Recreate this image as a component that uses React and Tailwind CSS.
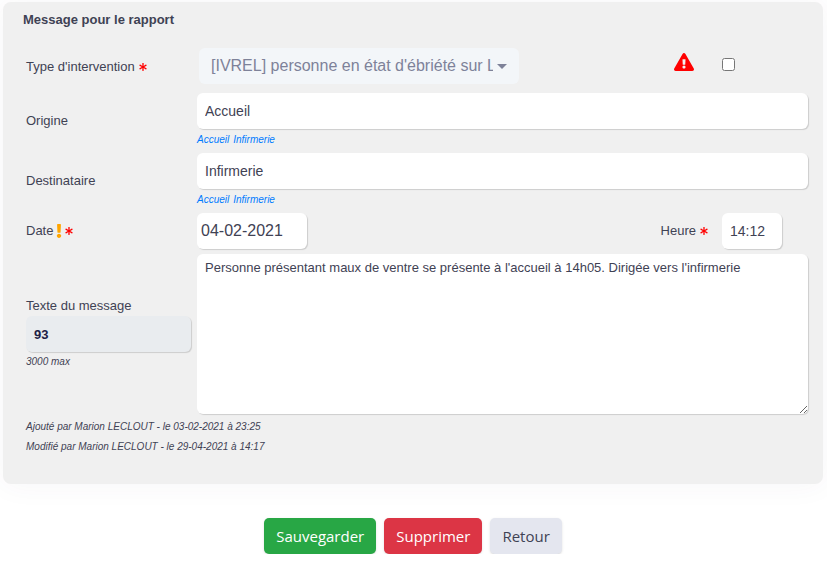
import { useState } from "react";
import { FaAsterisk, FaExclamation, FaExclamationTriangle } from "react-icons/fa";

const PLACES = ["Accueil", "Infirmerie"];

const fieldClass =
  "h-9 rounded-md bg-white text-[#3f4254] shadow-[1px_1px_1px_rgba(0,0,0,0.15)] outline-none";

function Required() {
  return <FaAsterisk className="mb-0.5 ml-1 inline size-2 text-[#ff0000]" />;
}

function PlaceField({ id, label, value, onChange }) {
  return (
    <div className="mb-1 grid grid-cols-[165px_1fr] items-center gap-x-1.5">
      <label htmlFor={id}>{label}</label>
      <div>
        <input
          id={id}
          type="text"
          className={`${fieldClass} block w-full px-2 text-sm`}
          value={value}
          onChange={(e) => onChange(e.target.value)}
        />
        <div className="flex h-5 items-center gap-1 pt-0.5 text-[10px] italic text-[#007bff]">
          {PLACES.map((place) => (
            <a
              key={place}
              href="#"
              onClick={(e) => {
                e.preventDefault();
                onChange(place);
              }}
            >
              {place}
            </a>
          ))}
        </div>
      </div>
    </div>
  );
}

export default function App() {
  const [form, setForm] = useState({
    origin: "Accueil",
    recipient: "Infirmerie",
    date: "04-02-2021",
    time: "14:12",
    important: false,
    text: "Personne présentant maux de ventre se présente à l'accueil à 14h05. Dirigée vers l'infirmerie",
  });

  function update(key, value) {
    setForm({ ...form, [key]: value });
  }

  return (
    <form
      className="pt-0.5 pr-1 pl-[3px] font-['Liberation_Sans',Arial,sans-serif] text-[13px] leading-5 text-[#3f4254]"
      onSubmit={(e) => e.preventDefault()}
    >
      <section className="rounded-lg bg-[#f0f0f0] pt-2 pr-[15px] pb-[27px] pl-5 shadow-[0_0_30px_rgba(82,63,105,0.05)]">
        <h3 className="mb-[18px] font-bold">Message pour le rapport</h3>

        <div className="pl-[3px]">
          <div className="mb-[9px] grid grid-cols-[165px_1fr] items-center gap-x-1.5">
            <label htmlFor="type" className="pt-0.5">
              Type d'intervention
              <Required />
            </label>
            <div className="flex items-center">
              <div className="relative ml-0.5 w-80">
                <select
                  id="type"
                  className="block h-9 w-full appearance-none rounded-md bg-[#f3f6f9] pr-[26px] pl-3 text-base text-[#7e8299] outline-none"
                >
                  <option>[IVREL] personne en état d'ébriété sur L</option>
                </select>
                <span className="pointer-events-none absolute top-4 right-3 border-x-5 border-t-5 border-x-transparent border-t-[#7e8299]" />
              </div>
              <label htmlFor="important" className="mr-7 ml-auto pb-2">
                <FaExclamationTriangle className="h-[18px] w-5 text-[#ff0000]" />
              </label>
              <input
                id="important"
                type="checkbox"
                aria-label="Important"
                className="mr-[73px] mb-1 size-[13px]"
                checked={form.important}
                onChange={(e) => update("important", e.target.checked)}
              />
            </div>
          </div>

          <PlaceField
            id="origin"
            label="Origine"
            value={form.origin}
            onChange={(value) => update("origin", value)}
          />
          <PlaceField
            id="recipient"
            label="Destinataire"
            value={form.recipient}
            onChange={(value) => update("recipient", value)}
          />

          <div className="mb-[5px] grid grid-cols-[165px_1fr] items-center gap-x-1.5">
            <label htmlFor="date">
              Date
              <FaExclamation className="mb-0.5 ml-0.5 inline h-3.5 w-2 text-[#ffa500]" />
              <FaAsterisk className="mb-0.5 ml-0.5 inline size-2 text-[#ff0000]" />
            </label>
            <div className="flex items-center">
              <input
                id="date"
                type="text"
                className={`${fieldClass} w-[110px] px-1 text-base`}
                value={form.date}
                onChange={(e) => update("date", e.target.value)}
              />
              <label htmlFor="time" className="mr-3.5 ml-auto">
                Heure
                <Required />
              </label>
              <input
                id="time"
                type="text"
                className={`${fieldClass} mr-[26px] w-[60px] px-2 text-sm`}
                value={form.time}
                onChange={(e) => update("time", e.target.value)}
              />
            </div>
          </div>

          <div className="mb-[3px] grid grid-cols-[165px_1fr] items-center gap-x-1.5">
            <div>
              <label htmlFor="text">Texte du message</label>
              <input
                type="text"
                readOnly
                aria-label="Nombre de caractères"
                className="block h-9 w-full rounded-md bg-[#e9ecef] px-2 text-[13px] font-bold text-[#212145] shadow-[1px_1px_1px_rgba(0,0,0,0.15)] outline-none"
                value={form.text.length}
              />
              <p className="text-[10px] leading-5 italic">3000 max</p>
            </div>
            <textarea
              id="text"
              className="block h-40 w-full resize rounded-md bg-white px-2 py-1 text-[13px] leading-5 text-[#3f4254] shadow-[1px_1px_1px_rgba(0,0,0,0.15)] outline-none"
              value={form.text}
              onChange={(e) => update("text", e.target.value)}
            />
          </div>

          <p className="text-[10px] leading-5 italic">
            Ajouté par Marion LECLOUT - le 03-02-2021 à 23:25
          </p>
          <p className="text-[10px] leading-5 italic">
            Modifié par Marion LECLOUT - le 29-04-2021 à 14:17
          </p>
        </div>
      </section>

      <div className="flex justify-center gap-2 pt-[34px] font-['Open_Sans',sans-serif] text-[15px]">
        <button type="submit" className="h-9 rounded-[5px] bg-[#28a745] px-3 text-white shadow-sm">
          Sauvegarder
        </button>
        <button type="button" className="h-9 rounded-[5px] bg-[#dc3545] px-3 text-white shadow-sm">
          Supprimer
        </button>
        <button type="button" className="h-9 rounded-[5px] bg-[#e4e6ef] px-3 text-[#3f4254] shadow-sm">
          Retour
        </button>
      </div>
    </form>
  );
}
